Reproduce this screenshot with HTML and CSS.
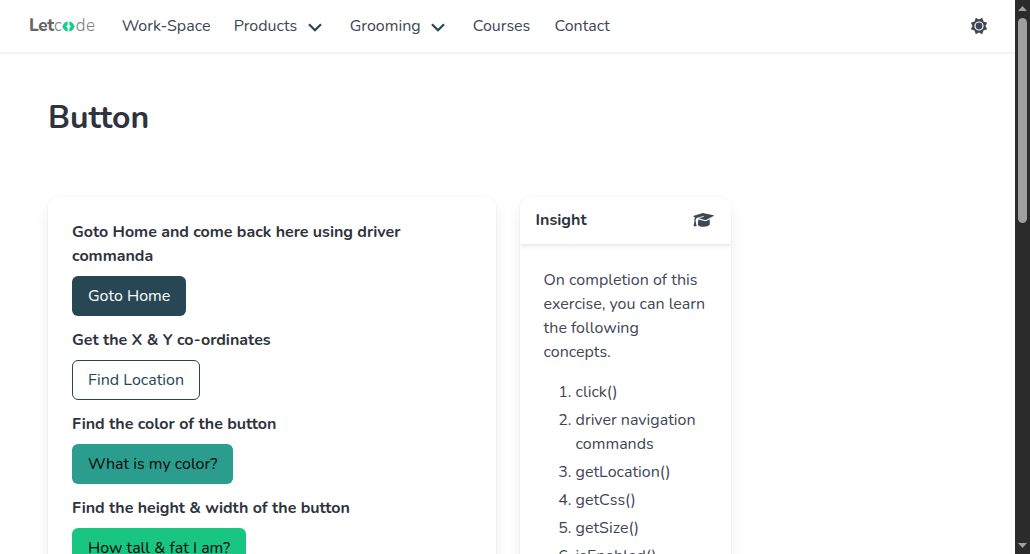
FILE: index.html
```html
<!DOCTYPE html>
<html lang="en">
<head>
<meta charset="utf-8">
<title>Button</title>
<link rel="stylesheet" href="styles.css">
</head>
<body>
<div class="viewport">
  <div class="page">
    <nav class="navbar">
      <div class="logo"><span class="logo-bold">Let</span><span class="logo-thin">c</span><svg class="logo-mark" viewBox="0 0 13 11"><path d="M5.700 .500v3L4.200 5.500l1.500 2v3C2.800 10.300 1.400 8 .300 5.500 1.400 3 2.800 .700 5.700 .500ZM7.300 .500v3l1.500 2-1.500 2v3c2.900-.200 4.300-2.500 5.400-5C11.600 3 10.200 .700 7.300 .500Z" fill="#08d585"/></svg><span class="logo-thin">de</span></div>
      <a class="link work">Work-Space</a>
      <a class="link products">Products<svg class="chevron" viewBox="0 0 14 9"><path d="M1 1.200 7 7.200l6-6"/></svg></a>
      <a class="link grooming">Grooming<svg class="chevron" viewBox="0 0 14 9"><path d="M1 1.200 7 7.200l6-6"/></svg></a>
      <a class="link courses">Courses</a>
      <a class="link contact">Contact</a>
      <svg class="sun" viewBox="0 0 18 18"><path fill-rule="evenodd" d="M5.800 .800 9 2.500 12.200 .800l1.300 3.700 3.700 1.300L15.500 9l1.700 3.200-3.700 1.300-1.300 3.700L9 15.500l-3.200 1.700-1.300-3.700-3.700-1.300L2.500 9 .800 5.800l3.700-1.300ZM9 4.400a4.600 4.600 0 1 0 0 9.200 4.600 4.600 0 0 0 0-9.200Z"/><circle cx="9" cy="9" r="3.400"/></svg>
    </nav>
    <main>
      <h1>Button</h1>
      <div class="columns">
        <section class="card exercises">
          <label>Goto Home and come back here using driver<br>commanda</label>
          <button class="btn home">Goto Home</button>
          <label>Get the X &amp; Y co-ordinates</label>
          <button class="btn location">Find Location</button>
          <label>Find the color of the button</label>
          <button class="btn color">What is my color?</button>
          <label>Find the height &amp; width of the button</label>
          <button class="btn size">How tall &amp; fat I am?</button>
        </section>
        <aside class="card insight">
          <header>Insight
            <svg class="cap" viewBox="0 0 21 16"><path d="M.800 3.800 9.800 .900l10.700 2.300c.500.200.500.600 0 .900l-7 3.600c-.700.300-1.200.300-1.900.200L5.800 6.300l5-1.600-.300-.700-6.800 2c-.800.700-1 1.800-1.100 3l1 5.300H.500l1-5.200c-.200-1.700 0-2.900.600-3.800L.600 4.700c-.400-.300-.300-.700.200-.900ZM5.300 7.500l6 1.500c.900.200 1.800.100 2.600-.300l2.800-1.500.100 5.400c-1.200 1.500-3.300 2.200-6 2.200-2.800 0-5-.600-6-1.900Z"/></svg>
          </header>
          <div class="content">
            <p>On completion of this<br>exercise, you can learn<br>the following<br>concepts.</p>
            <ol><li>click()</li><li>driver navigation<br>commands</li><li>getLocation()</li><li>getCss()</li><li>getSize()</li><li>isEnabled()</li></ol>
          </div>
        </aside>
      </div>
    </main>
  </div>
  <div class="scrollbar"><svg class="arrow" viewBox="0 0 9 5"><path d="M0 5 4.500 0 9 5Z"/></svg><div class="thumb"></div><svg class="arrow" viewBox="0 0 9 5"><path d="M0 0h9L4.500 5Z"/></svg></div>
</div>
</body>
</html>
```
FILE: styles.css
```css
*{box-sizing:border-box}
body{margin:0;font:16px/24px Nunito,Lato,sans-serif;color:#404654;background:#fff}
.viewport{display:flex;width:1030px;height:554px;overflow:hidden}
.page{width:1015px;height:554px;overflow:hidden}
.navbar{display:flex;align-items:center;height:52px;box-shadow:0 2px 0 #f3f3f5;padding-left:29px}
.logo{display:flex;align-items:center;width:92.700px;font-size:17px;color:#666}
.logo-bold{font-weight:800;letter-spacing:-.300px}
.logo-thin{font-weight:300;color:#808080;letter-spacing:.500px}
.logo-mark{width:13px;height:11px;margin:1px .500px 0 0}
.link{display:flex;align-items:center}
.work{width:112px}
.products{width:116px}
.grooming{width:123px}
.courses{width:81.800px}
.chevron{width:14px;height:9px;margin:3px 0 0 10.500px;fill:none;stroke:#264653;stroke-width:2.200}
.sun{width:18px;height:18px;margin-left:auto;margin-right:27px;fill:#404654}
main{padding:0 48px}
h1{margin:0;padding-top:48px;height:144px;font-size:32px;line-height:36px;font-weight:700;color:#2e333d}
.columns{display:flex;gap:24px}
.card{border-radius:12px;background:#fff;box-shadow:0 8px 16px -2px rgba(10,10,10,.1),0 0 0 1px rgba(10,10,10,.02)}
.exercises{width:447.600px;height:600px;padding:24px;display:flex;flex-direction:column;align-items:flex-start}
label{font-weight:700;color:#2e333d;margin-bottom:8px;white-space:nowrap}
.btn{height:40px;padding:0 15px;border:1px solid transparent;border-radius:6px;font:inherit;margin-bottom:12px;text-align:left;white-space:nowrap}
.home{width:114px;background:#284754;color:#fff}
.location{width:128px;background:#fff;border-color:#264653;color:#264653}
.color{width:161px;background:#2a9d8f;color:#080808}
.size{width:174px;background:#18c682;color:#080808}
.insight{width:211.500px;height:600px;overflow:hidden}
.insight header{display:flex;align-items:center;justify-content:space-between;height:48px;padding:0 17px 0 16px;font-weight:700;color:#2e333d;box-shadow:0 2px 4px rgba(10,10,10,.1)}
.cap{width:21px;height:16px;fill:#404654}
.content{padding:24px;white-space:nowrap}
.content p{margin:0 0 16px}
ol{margin:0;padding-left:32px}
li{margin-bottom:4px}
.scrollbar{width:15px;background:#2b2b2b;display:flex;flex-direction:column;align-items:center;padding:6px 0}
.arrow{width:9px;height:5px;fill:#9f9f9f}
.thumb{width:9px;height:205px;border-radius:5px;background:#9f9f9f;margin:7px 0 auto}
```
